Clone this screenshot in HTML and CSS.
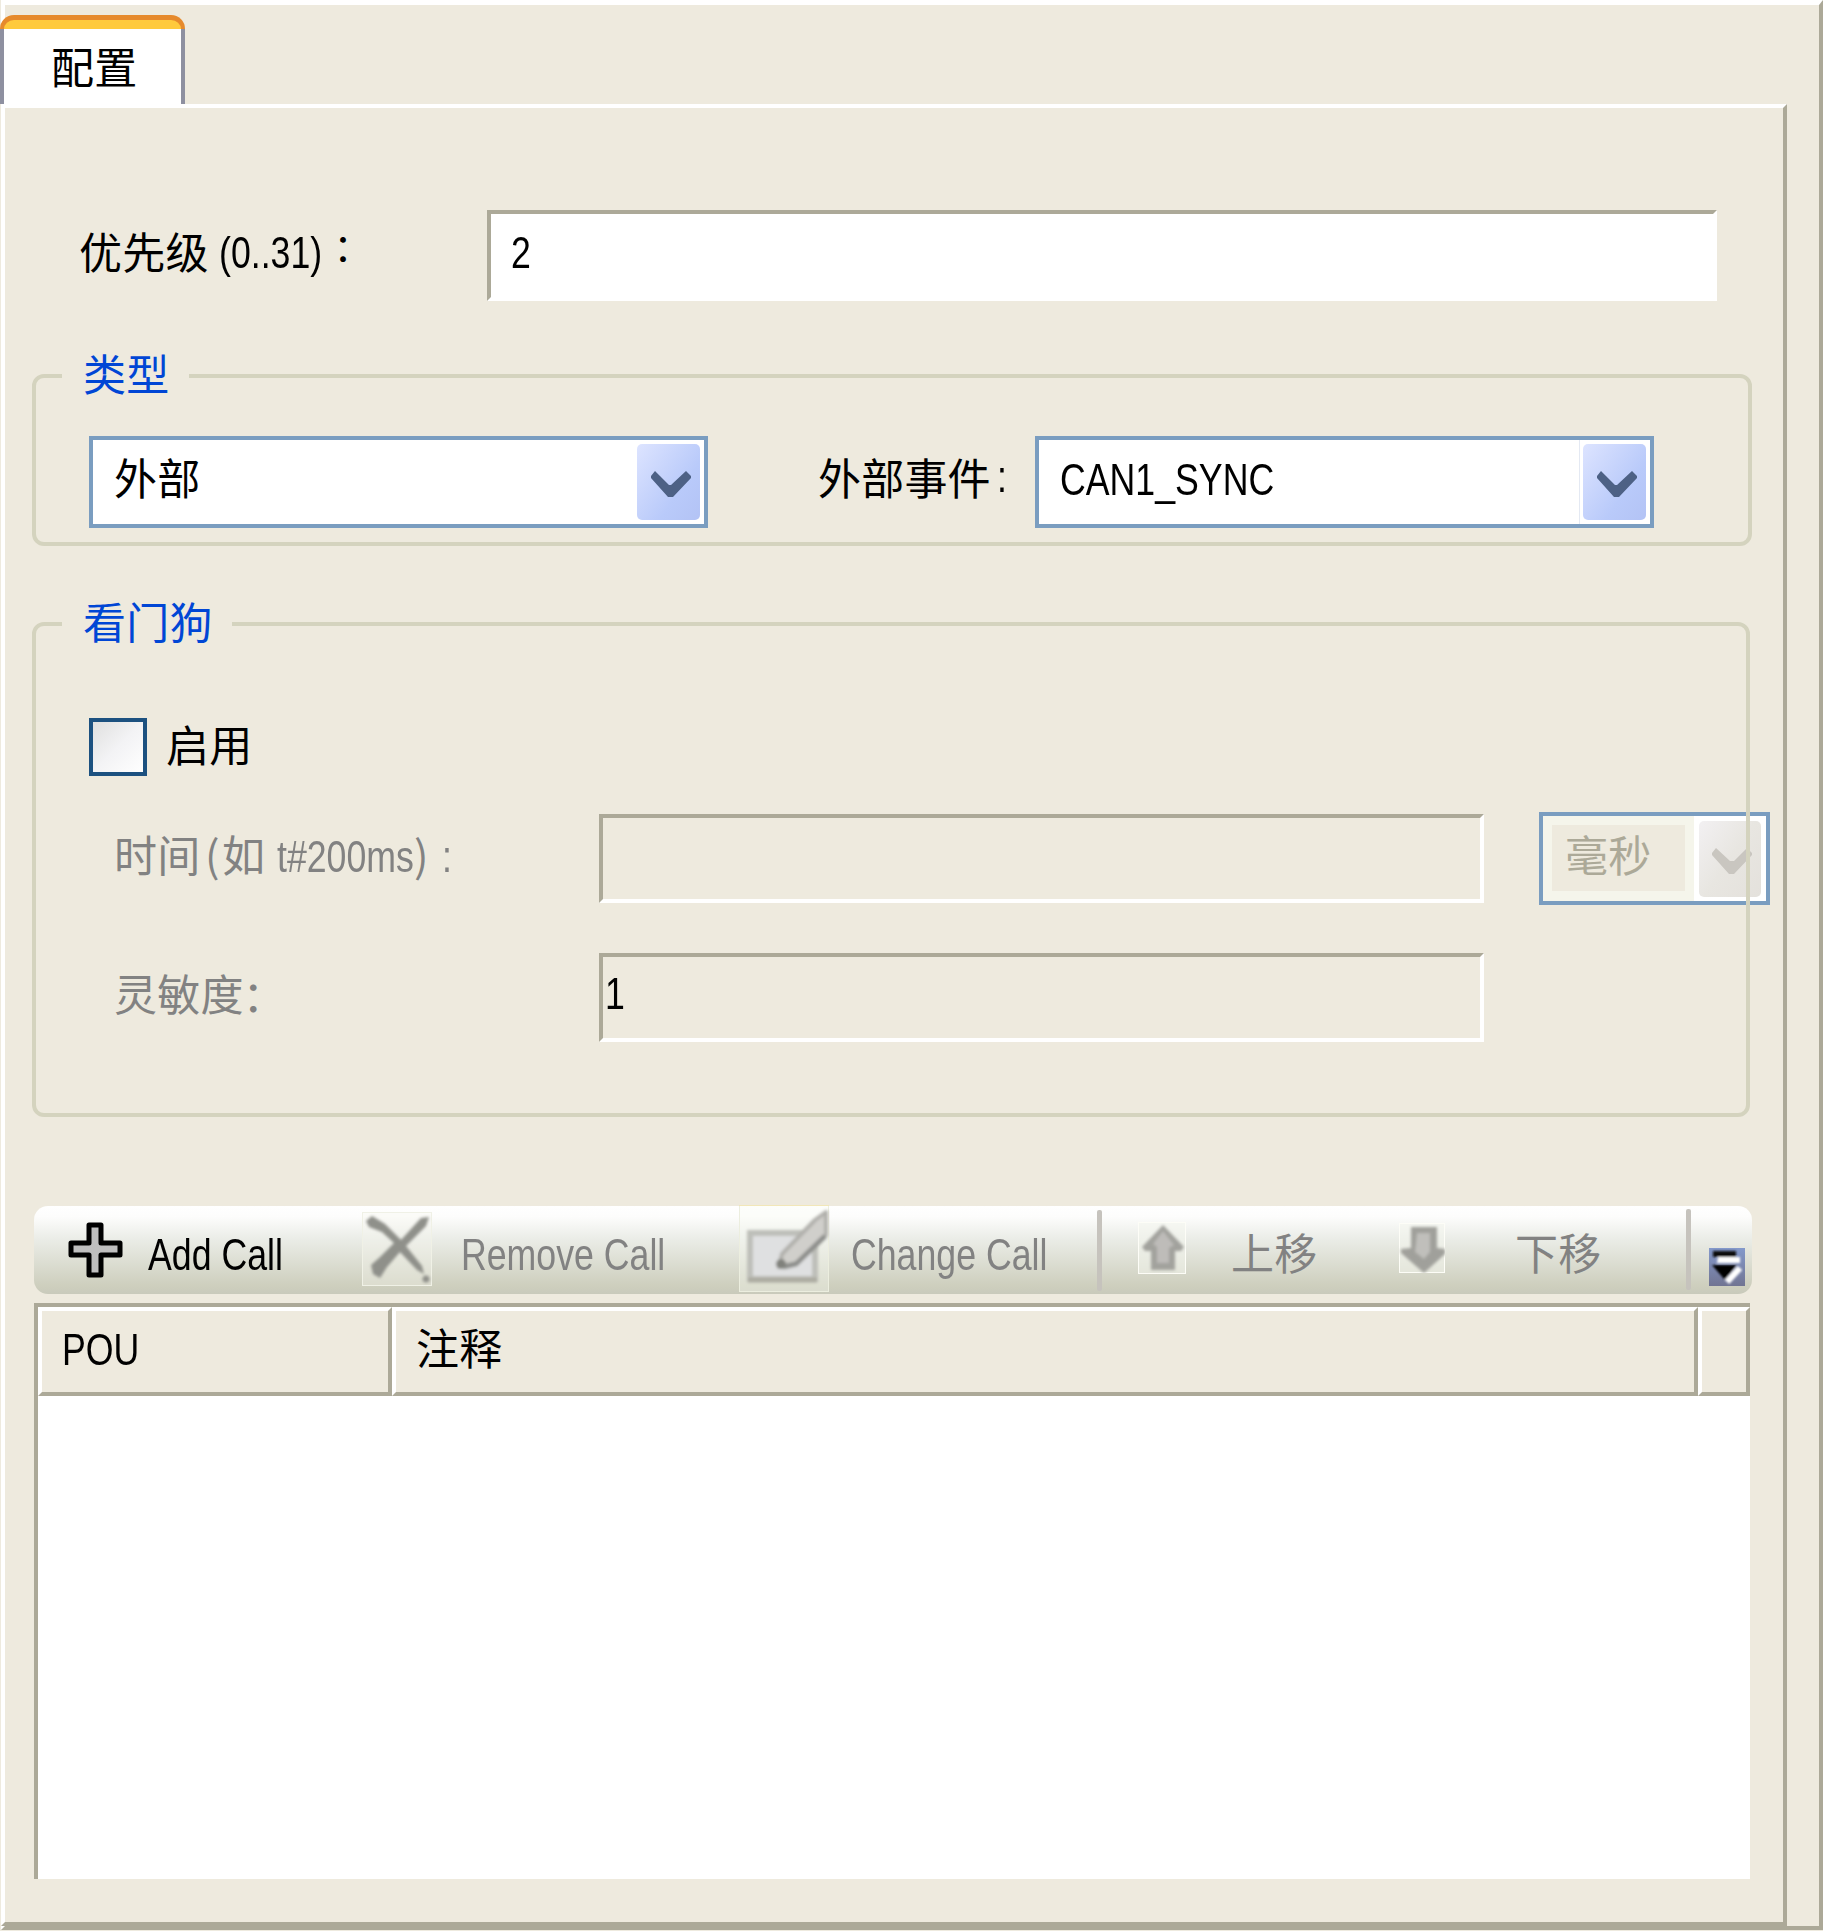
FILE: index.html
```html
<!DOCTYPE html>
<html lang="zh-CN">
<head>
<meta charset="utf-8">
<title>配置</title>
<link rel="stylesheet" href="styles.css">
</head>
<body>
<div class="window">
  <div class="tabs"><div class="tab"><div class="tab-cap"></div><div class="tab-body"><span class="cjk">配置</span></div></div></div>
  <main class="panel">
    <div class="priority-row">
      <div class="priority-label"><span class="cjk">优先级</span><span class="latin priority-range">(0..31)</span><span class="cjk priority-colon">：</span></div>
      <div class="field priority-field"><span class="latin">2</span></div>
    </div>

    <section class="group type-group">
      <h2 class="legend cjk legend-type">类型</h2>
      <div class="type-row">
        <div class="combo"><span class="cjk combo-text">外部</span>
          <span class="combo-button"><svg width="63" height="76" viewBox="0 0 63 76"><path d="M14 32V34L31 53H36L54 34V32L49 27L34 41H32L18 27Z" fill="#4d6185"/></svg></span>
        </div>
        <div class="event-label"><span class="cjk">外部事件</span><span class="latin">:</span></div>
        <div class="combo combo-split"><span class="latin combo-text">CAN1_SYNC</span>
          <span class="combo-button"><svg width="63" height="76" viewBox="0 0 63 76"><path d="M14 32V34L31 53H36L54 34V32L49 27L34 41H32L18 27Z" fill="#4d6185"/></svg></span>
        </div>
      </div>
    </section>

    <section class="group watchdog-group">
      <h2 class="legend cjk legend-watchdog">看门狗</h2>
      <div class="enable-row"><span class="checkbox"></span><span class="cjk">启用</span></div>
      <div class="time-row">
        <div class="time-label"><span class="cjk t-time">时间</span><span class="cjk t-open">(</span><span class="cjk t-eg">如</span><span class="latin t-value">t#200ms</span><span class="cjk t-close">)</span><span class="latin">:</span></div>
        <div class="field disabled-field"></div>
        <div class="combo combo-disabled"><span class="unit"><span class="cjk">毫秒</span></span>
          <span class="combo-button"><svg width="62" height="76" viewBox="0 0 62 76"><path d="M13 32V34L30 53H35L53 34V32L48 27L35 40H31L17 27Z" fill="#c9c6c0"/></svg></span>
        </div>
      </div>
      <div class="sens-row">
        <div class="sens-label"><span class="cjk">灵敏度</span><span class="cjk sens-colon">：</span></div>
        <div class="field disabled-field"><span class="latin">1</span></div>
      </div>
    </section>

    <div class="toolbar">
      <svg class="ic-add" width="56" height="56" viewBox="0 0 56 56"><path d="M21 3H33V21H52V33H33V53H21V33H3V21H21Z" fill="#bfbfbf" stroke="#000" stroke-width="5" stroke-linejoin="round"/></svg>
      <span class="latin tb-add">Add Call</span>
      <svg class="ic-remove" width="70" height="74" viewBox="0 0 70 74">
        <defs><filter id="soft" x="-20%" y="-20%" width="140%" height="140%"><feGaussianBlur stdDeviation="1.7"/></filter></defs>
        <rect x=".5" y=".5" width="69" height="73" fill="#f6f7ef" fill-opacity=".35" stroke="#f0f1e6"/>
        <g filter="url(#soft)" fill="#8f908a"><path d="M4 9L10 4L23 12L39 28L59 6L67 5L64 14L44 34L60 54L62 62L55 58L38 40L25 55L18 66L11 62L9 53L17 46L32 31L20 20L7 15Z"/><circle cx="64" cy="67" r="3.5"/></g>
      </svg>
      <span class="latin tb-remove">Remove Call</span>
      <svg class="ic-change" width="91" height="88" viewBox="0 0 91 88">
        <rect x=".5" y=".5" width="89" height="86" fill="#fafbf4" fill-opacity=".35" stroke="#eceedf"/>
        <path d="M0 .5H90" stroke="#f2e7b8"/>
        <g filter="url(#soft)"><rect x="11" y="28" width="65" height="46" fill="#dfe0e1" stroke="#bebfb9" stroke-width="6"/><path d="M9 75H78" stroke="#abaaa0" stroke-width="5"/>
        <path d="M40 62L43 49L76 15L87 7V30L58 58Z" fill="#d0cfcb" stroke="#b1b0ac" stroke-width="4" stroke-linejoin="round"/><path d="M86 31L57 59L44 62" fill="none" stroke="#8e8f8c" stroke-width="5"/><circle cx="42" cy="59" r="5" fill="#80817c"/></g>
      </svg>
      <span class="latin tb-change">Change Call</span>
      <span class="separator sep-a"></span>
      <svg class="ic-up" width="48" height="52" viewBox="0 0 48 52"><rect x=".5" y=".5" width="47" height="51" fill="#f4f5ed" fill-opacity=".5" stroke="#fdfdf7"/><path filter="url(#soft)" d="M25 3L46 25L43 29H37V48H13V29H7L4 25Z" fill="#a2a29d"/><path filter="url(#soft)" d="M25 9L36 23L31 26V41H19V25L15 22Z" fill="#bebcb9"/></svg>
      <span class="cjk tb-up">上移</span>
      <svg class="ic-down" width="46" height="50" viewBox="0 0 46 50"><rect x=".5" y=".5" width="45" height="49" fill="#f4f5ed" fill-opacity=".5" stroke="#fdfdf7"/><path filter="url(#soft)" d="M12 4H38V25L46 26V31L25 50L2 30V26L12 25Z" fill="#a0a09b"/><path filter="url(#soft)" d="M18 10H31V29L25 36L16 29Z" fill="#c0bfbb"/></svg>
      <span class="cjk tb-down">下移</span>
      <span class="separator sep-b"></span>
      <svg class="ic-more" width="36" height="38" viewBox="0 0 36 38"><defs><linearGradient id="more" x2="0" y2="1"><stop stop-color="#8499cb"/><stop offset="1" stop-color="#717492"/></linearGradient><filter id="edge"><feGaussianBlur stdDeviation="1.1"/></filter></defs><rect width="36" height="38" fill="url(#more)"/><g filter="url(#edge)"><path d="M4 3H27V9H4Z" fill="#080810"/><path d="M9 9H31V15H8Z" fill="#fff"/><path d="M3 17H28L16 32Z" fill="#000"/><path d="M31 20L18 34" stroke="#fff" stroke-width="6"/></g></svg>
    </div>

    <div class="table">
      <div class="thead">
        <div class="th th-pou"><span class="latin">POU</span></div>
        <div class="th th-note"><span class="cjk">注释</span></div>
        <div class="th th-end"></div>
      </div>
      <div class="tbody"></div>
    </div>
  </main>
</div>
</body>
</html>
```

FILE: styles.css
```css
* { box-sizing: border-box; }

body { margin: 0; background: #eeeade; overflow: hidden; }

.window {
  width: 1822px;
  height: 1930px;
  margin-left: 1px;
  border: 4px solid;
  border-color: #fff #aca998 #aca998 #fff;
  border-top-width: 5px;
  background: #eeeade;
  color: #000;
}

svg { display: block; flex: none; }

.cjk {
  display: block;
  flex: none;
  font: 400 43px/50px "Noto Sans CJK SC", sans-serif;
  letter-spacing: 0.2px;
  white-space: nowrap;
}

/* Condensed Latin: the glyphs are narrowed from the left edge */
.latin {
  display: block;
  flex: none;
  font: 400 45px/50px "Liberation Sans", Arial, sans-serif;
  white-space: nowrap;
  transform: scaleX(0.793);
  transform-origin: 0 50%;
}

.tabs { height: 99px; padding-top: 10px; margin-left: -5px; }
.tab { width: 185px; }
.tab-cap {
  height: 14px;
  border: 4px solid #e68a2c;
  border-top-width: 5px;
  border-bottom: 0;
  border-radius: 14px 14px 0 0;
  background: #ffca3c;
}
.tab-body {
  height: 75px;
  padding: 11px 0 0 47px;
  border: solid #8e90a0;
  border-width: 0 4px;
  background: #fff;
}

.panel {
  width: 1786px;
  height: 1822px;
  margin-left: -4px;
  padding: 102px 0 0 26px;
  border: 4px solid;
  border-color: #fff #aca998 #aca998 #fff;
  display: flex;
  flex-direction: column;
}

.priority-row { display: flex; height: 164px; flex: none; }
.priority-label { display: flex; width: 456px; padding: 15px 0 0 48px; }
.priority-range { width: 106px; margin: 3px 0 0 10px; }
.priority-colon { margin: -5px 0 0 9px; font-size: 38px; }

.field { border: 4px solid; border-color: #aca998 #fff #fff #aca998; flex: none; }
.priority-field { width: 1230px; height: 91px; padding: 14px 0 0 20px; background: #fff; }

.group { position: relative; margin-left: 1px; flex: none; }
.group::after {
  content: "";
  position: absolute;
  inset: 0;
  border: 4px solid #d4d3be;
  border-radius: 12px;
  pointer-events: none;
}
.type-group { width: 1720px; height: 172px; margin-bottom: 76px; }
.watchdog-group { width: 1718px; height: 495px; margin-bottom: 89px; }

.legend {
  position: relative;
  z-index: 1;
  margin: -27px 0 0 30px;
  padding-left: 21px;
  background: #eeeade;
  color: #0046d5;
}
.legend-type { width: 127px; }
.legend-watchdog { width: 170px; }

.type-row { display: flex; padding: 39px 0 0 57px; }
.combo {
  display: flex;
  justify-content: space-between;
  width: 619px;
  height: 92px;
  padding: 4px 4px 0 21px;
  border: 4px solid #7a9dc0;
  background: #fff;
  flex: none;
}
.combo-text { margin-top: 7px; }
.combo-button {
  width: 63px;
  height: 76px;
  border-radius: 5px;
  background: linear-gradient(125deg, #dde4ff, #b9cafa 65%, #b3c3f5);
  flex: none;
}
.combo-split { background: linear-gradient(90deg, #fff 540px, #e4e9f3 540px 541px, #fff 541px); }
.combo-split .combo-text { width: 220px; margin-top: 11px; }
.event-label { display: flex; width: 327px; padding: 15px 0 0 110px; }
.event-label .latin { margin: 1px 0 0 6px; }

.enable-row { display: flex; padding: 73px 0 0 57px; height: 169px; }
.checkbox {
  width: 58px;
  height: 58px;
  margin-right: 19px;
  border: 4px solid #1c5180;
  background: linear-gradient(135deg, #e0e0df, #f3f3f5 50%, #fff);
}
.enable-row .cjk { margin-top: 0; }

.time-row { display: flex; height: 139px; }
.time-label, .sens-label { display: flex; flex: none; width: 567px; padding-left: 82px; color: #828282; }
.time-label { padding-top: 14px; }
.t-time { width: 91px; }
.t-open { width: 17px; }
.t-eg { width: 55px; }
.t-value { width: 137px; margin-top: 4px; }
.t-close { width: 28px; }
.time-label .latin:last-child { margin-top: 4px; }
.disabled-field { width: 885px; height: 89px; }
.combo-disabled { width: 231px; height: 93px; margin: -2px 0 0 55px; padding: 5px 5px 0 0; }
.unit {
  width: 151px;
  height: 85px;
  margin-top: -5px;
  padding: 3px 0 0 13px;
  border: solid #f5f5eb;
  border-width: 9px 9px 10px;
  background: #eeeade;
  color: #aca998;
}
.combo-disabled .combo-button { width: 62px; background: linear-gradient(125deg, #f2f0f2, #e8e6e1 50%, #e4e1dc); }

.sens-row { display: flex; }
.sens-label { padding-top: 14px; }
.sens-colon { margin: 1px 0 0 -1px; }
.sens-row .field { padding: 12px 0 0 2px; }

.toolbar {
  display: flex;
  width: 1718px;
  height: 88px;
  margin: 0 0 9px 3px;
  border-radius: 14px;
  background: linear-gradient(#fff 0, #fdfdfc 12%, #eceee9 35%, #cecfbe 90%, #c9cabb);
  color: #828282;
  flex: none;
}
.ic-add { margin: 16px 0 0 34px; }
.tb-add { width: 214px; margin: 24px 0 0 24px; color: #000; }
.ic-remove { margin-top: 6px; }
.tb-remove { width: 278px; margin: 24px 0 0 29px; }
.ic-change { margin-top: -1px; }
.tb-change { width: 246px; margin: 24px 0 0 21px; }
.separator { width: 5px; height: 81px; border-radius: 2px; background: #c6c3bd; flex: none; }
.sep-a { margin-top: 4px; }
.ic-up { margin: 16px 0 0 36px; }
.tb-up { width: 168px; margin: 20px 0 0 45px; }
.ic-down { margin-top: 17px; }
.tb-down { width: 171px; margin: 20px 0 0 70px; }
.sep-b { margin-top: 3px; }
.ic-more { margin: 42px 0 0 18px; }

.table {
  width: 1716px;
  height: 576px;
  margin-left: 3px;
  border-top: 4px solid #aca998;
  border-left: 4px solid #aca998;
  background: #fff;
  flex: none;
}
.thead { display: flex; height: 89px; }
.th { border: 4px solid; border-color: #fff #aca998 #aca998 #fff; background: #eeeade; flex: none; }
.th-pou { width: 354px; padding: 14px 0 0 20px; }
.th-note { width: 1306px; padding: 10px 0 0 20px; }
.th-end { width: 52px; }
```
